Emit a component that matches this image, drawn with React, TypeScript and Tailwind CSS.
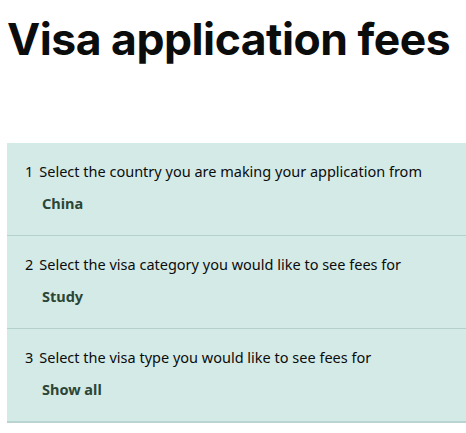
const steps = [
    { num: "1", question: "Select the country you are making your application from", answer: "China" },
    { num: "2", question: "Select the visa category you would like to see fees for", answer: "Study" },
    { num: "3", question: "Select the visa type you would like to see fees for", answer: "Show all" },
];

export default function App() {
    return (
        <div className="min-h-[433px] w-[466px] overflow-hidden bg-white font-['Noto_Sans',sans-serif] text-[#0b0c0c]">
            <h1 className="pl-[7px] pt-[9px] font-['Inter',sans-serif] text-[44.5px] font-bold leading-[60px] tracking-[-0.5px]">
                Visa application fees
            </h1>
            <div className="ml-[7px] mt-[74px] border-b-2 border-[#b9d4d0] bg-[#d4eae7]">
                {steps.map((step, i) => (
                    <div
                        key={step.num}
                        className={
                            i > 0
                                ? "border-t border-[#b4d0cc] pb-[22px] pt-[19px]"
                                : "pb-[22px] pt-[19px]"
                        }
                    >
                        <div className="flex h-[20px] items-center pl-[18px] text-[14.5px]">
                            <span className="mr-[6px]">{step.num}</span>
                            <span>{step.question}</span>
                        </div>
                        <div className="mt-[11px] h-[20px] pl-[35px] text-[14.5px] font-bold leading-[20px] text-[#2b4636]">
                            {step.answer}
                        </div>
                    </div>
                ))}
            </div>
        </div>
    );
}
